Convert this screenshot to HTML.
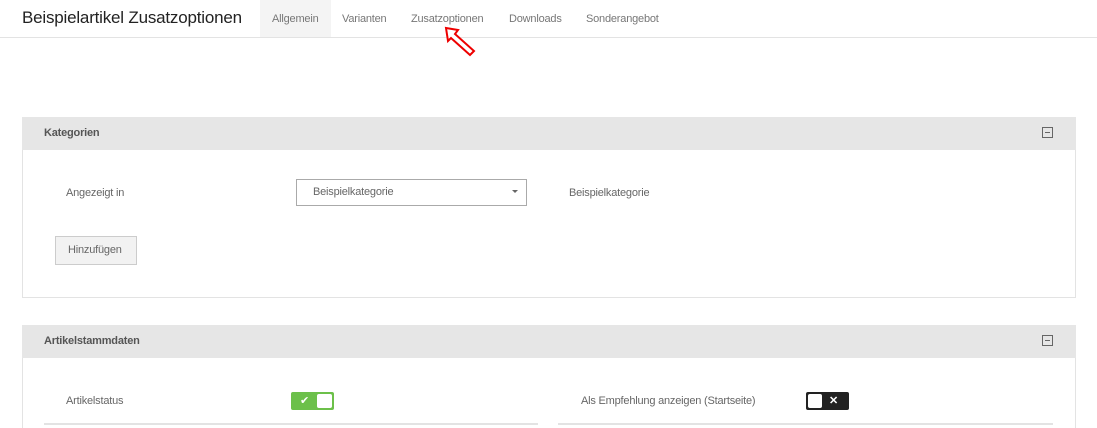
<!DOCTYPE html>
<html><head><meta charset="utf-8"><style>
*{margin:0;padding:0;box-sizing:border-box}
html,body{width:1097px;height:428px;overflow:hidden}
body{background:#fff;font-family:"Liberation Sans",sans-serif;color:#666;position:relative}
.a{position:absolute;white-space:nowrap}
.t{font-size:11px;letter-spacing:-0.2px}
</style></head><body>
<div class="a" style="left:0;top:37px;width:1097px;height:1px;background:#e3e3e3"></div>
<div class="a" style="left:22px;top:8px;font-size:17px;color:#222;letter-spacing:-0.2px">Beispielartikel Zusatzoptionen</div>
<div class="a" style="left:260px;top:0;width:71px;height:37px;background:#f4f4f4"></div>
<div class="a t" style="left:272px;top:13px;color:#777">Allgemein</div>
<div class="a t" style="left:342px;top:13px;color:#777">Varianten</div>
<div class="a t" style="left:411px;top:13px;color:#777">Zusatzoptionen</div>
<div class="a t" style="left:509px;top:13px;color:#777">Downloads</div>
<div class="a t" style="left:586px;top:13px;color:#777">Sonderangebot</div>
<svg class="a" style="left:443px;top:26px" width="34" height="32" viewBox="0 0 34 32"><path d="M3 2 L15 4 L12 8 L31 25 L27 29 L8 12 L5 15 Z" fill="#fff" stroke="#e00" stroke-width="2"/></svg>

<div class="a" style="left:22px;top:117px;width:1054px;height:181px;border:1px solid #e3e3e3"></div>
<div class="a" style="left:22px;top:117px;width:1054px;height:33px;background:#e6e6e6"></div>
<div class="a t" style="left:44px;top:127px;font-weight:bold;color:#555">Kategorien</div>
<div class="a" style="left:1042px;top:127px;width:11px;height:11px;border:1px solid #666"><div style="margin:4px 2px 0;height:1px;background:#666"></div></div>
<div class="a t" style="left:66px;top:187px">Angezeigt in</div>
<div class="a" style="left:296px;top:179px;width:231px;height:27px;border:1px solid #aaa"></div>
<div class="a t" style="left:313px;top:186px">Beispielkategorie</div>
<div class="a" style="left:512px;top:190px;border-left:3px solid transparent;border-right:3px solid transparent;border-top:3px solid #666"></div>
<div class="a t" style="left:569px;top:187px">Beispielkategorie</div>
<div class="a" style="left:55px;top:236px;width:82px;height:29px;background:#f2f2f2;border:1px solid #ccc"></div>
<div class="a t" style="left:68px;top:244px">Hinzufügen</div>

<div class="a" style="left:22px;top:325px;width:1054px;height:120px;border:1px solid #e3e3e3"></div>
<div class="a" style="left:22px;top:325px;width:1054px;height:33px;background:#e6e6e6"></div>
<div class="a t" style="left:44px;top:335px;font-weight:bold;color:#555">Artikelstammdaten</div>
<div class="a" style="left:1042px;top:335px;width:11px;height:11px;border:1px solid #666"><div style="margin:4px 2px 0;height:1px;background:#666"></div></div>
<div class="a t" style="left:66px;top:395px">Artikelstatus</div>
<div class="a" style="left:291px;top:392px;width:43px;height:18px;background:#6cc04a;border-radius:2px"></div>
<div class="a" style="left:317px;top:394px;width:15px;height:14px;background:#fff;border-radius:2px"></div>
<div class="a" style="left:300px;top:394px;color:#fff;font-size:11px">✔</div>
<div class="a t" style="left:581px;top:395px">Als Empfehlung anzeigen (Startseite)</div>
<div class="a" style="left:806px;top:392px;width:43px;height:18px;background:#222;border-radius:2px"></div>
<div class="a" style="left:808px;top:394px;width:14px;height:14px;background:#fff;border-radius:2px"></div>
<div class="a" style="left:829px;top:394px;color:#fff;font-size:11px;font-weight:bold">✕</div>
<div class="a" style="left:44px;top:423px;width:494px;height:2px;background:#e3e3e3"></div>
<div class="a" style="left:558px;top:423px;width:495px;height:2px;background:#e3e3e3"></div>
</body></html>
